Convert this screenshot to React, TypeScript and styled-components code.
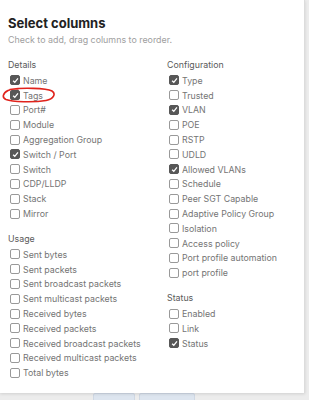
import React from "react";
import styled, { createGlobalStyle } from "styled-components";

type Col = { label: string; checked?: boolean };
type Group = { title: string; items: Col[] };

const GlobalStyle = createGlobalStyle`
  body {
    margin: 0;
    background: #ececec;
    font-family: Inter, "Liberation Sans", sans-serif;
  }
`;

const Page = styled.div`
  width: 309px;
  height: 400px;
  overflow: hidden;
  background: #ececec;
`;

const Panel = styled.div`
  position: relative;
  width: 305px;
  height: 393px;
  box-sizing: border-box;
  background: #fff;
  border-right: 1px solid #dcdcdc;
  box-shadow: 0 1px 3px rgba(0, 0, 0, 0.12);
  padding: 14px 8px 0 8px;
`;

const Title = styled.h2`
  margin: 0;
  font-size: 13px;
  line-height: 18px;
  font-weight: 700;
  color: #222;
`;

const Subtitle = styled.p`
  margin: 1px 0 10px 0;
  font-size: 8.9px;
  line-height: 14px;
  color: #a0a0a0;
`;

const Columns = styled.div`
  display: grid;
  grid-template-columns: 159px 1fr;
`;

const Section = styled.div`
  margin-bottom: 10px;
`;

const SectionTitle = styled.div`
  height: 15px;
  line-height: 15px;
  margin-bottom: 1px;
  font-size: 8.8px;
  color: #5a5a5a;
`;

const Item = styled.label`
  display: flex;
  align-items: center;
  gap: 3px;
  height: 14.8px;
  padding-left: 2px;
  font-size: 8.8px;
  color: #747474;
`;

const Box = styled.span<{ $on?: boolean }>`
  width: 8px;
  height: 8px;
  flex: none;
  border-radius: 2px;
  border: 1px solid ${(p) => (p.$on ? "#575757" : "#999")};
  background: ${(p) => (p.$on ? "#575757" : "#fff")};
  display: flex;
  align-items: center;
  justify-content: center;
`;

const Mark = styled.div`
  position: absolute;
  left: 2px;
  top: 87px;
  width: 54px;
  height: 16px;
  pointer-events: none;
`;

const Footer = styled.div`
  display: flex;
  gap: 4px;
  padding-left: 93px;
`;

const GhostButton = styled.div<{ $w: number }>`
  width: ${(p) => p.$w}px;
  height: 10px;
  background: #dde5ef;
  border: 1px solid #cfd8e4;
  border-radius: 2px;
`;

const left: Group[] = [
  {
    title: "Details",
    items: [
      { label: "Name", checked: true },
      { label: "Tags", checked: true },
      { label: "Port#" },
      { label: "Module" },
      { label: "Aggregation Group" },
      { label: "Switch / Port", checked: true },
      { label: "Switch" },
      { label: "CDP/LLDP" },
      { label: "Stack" },
      { label: "Mirror" },
    ],
  },
  {
    title: "Usage",
    items: [
      { label: "Sent bytes" },
      { label: "Sent packets" },
      { label: "Sent broadcast packets" },
      { label: "Sent multicast packets" },
      { label: "Received bytes" },
      { label: "Received packets" },
      { label: "Received broadcast packets" },
      { label: "Received multicast packets" },
      { label: "Total bytes" },
    ],
  },
];

const right: Group[] = [
  {
    title: "Configuration",
    items: [
      { label: "Type", checked: true },
      { label: "Trusted" },
      { label: "VLAN", checked: true },
      { label: "POE" },
      { label: "RSTP" },
      { label: "UDLD" },
      { label: "Allowed VLANs", checked: true },
      { label: "Schedule" },
      { label: "Peer SGT Capable" },
      { label: "Adaptive Policy Group" },
      { label: "Isolation" },
      { label: "Access policy" },
      { label: "Port profile automation" },
      { label: "port profile" },
    ],
  },
  {
    title: "Status",
    items: [
      { label: "Enabled" },
      { label: "Link" },
      { label: "Status", checked: true },
    ],
  },
];

const Check = () => (
  <svg width="7" height="7" viewBox="0 0 8 8">
    <path d="M1.3 4.2 L3.2 6.1 L6.8 1.6" fill="none" stroke="#fff" strokeWidth="1.5" />
  </svg>
);

const Column = ({ groups }: { groups: Group[] }) => (
  <div>
    {groups.map((g) => (
      <Section key={g.title}>
        <SectionTitle>{g.title}</SectionTitle>
        {g.items.map((it) => (
          <Item key={it.label}>
            <Box $on={it.checked}>{it.checked && <Check />}</Box>
            {it.label}
          </Item>
        ))}
      </Section>
    ))}
  </div>
);

export default function App() {
  return (
    <Page>
      <GlobalStyle />
      <Panel>
        <Title>Select columns</Title>
        <Subtitle>Check to add, drag columns to reorder.</Subtitle>
        <Columns>
          <Column groups={left} />
          <Column groups={right} />
        </Columns>
        <Mark>
          <svg width="54" height="16" viewBox="0 0 54 16">
            <path
              d="M8 2.5 C20 0.5 44 1 50 4 C54 6.5 52 12 44 13.5 C32 15.5 10 15 4 12.5 C-0.5 10.5 1 6 6 3.5 C9 2 13 1.8 16 2"
              fill="none"
              stroke="#e0231c"
              strokeWidth="1.6"
              strokeLinecap="round"
            />
          </svg>
        </Mark>
      </Panel>
      <Footer>
        <GhostButton $w={40} />
        <GhostButton $w={54} />
      </Footer>
    </Page>
  );
}
